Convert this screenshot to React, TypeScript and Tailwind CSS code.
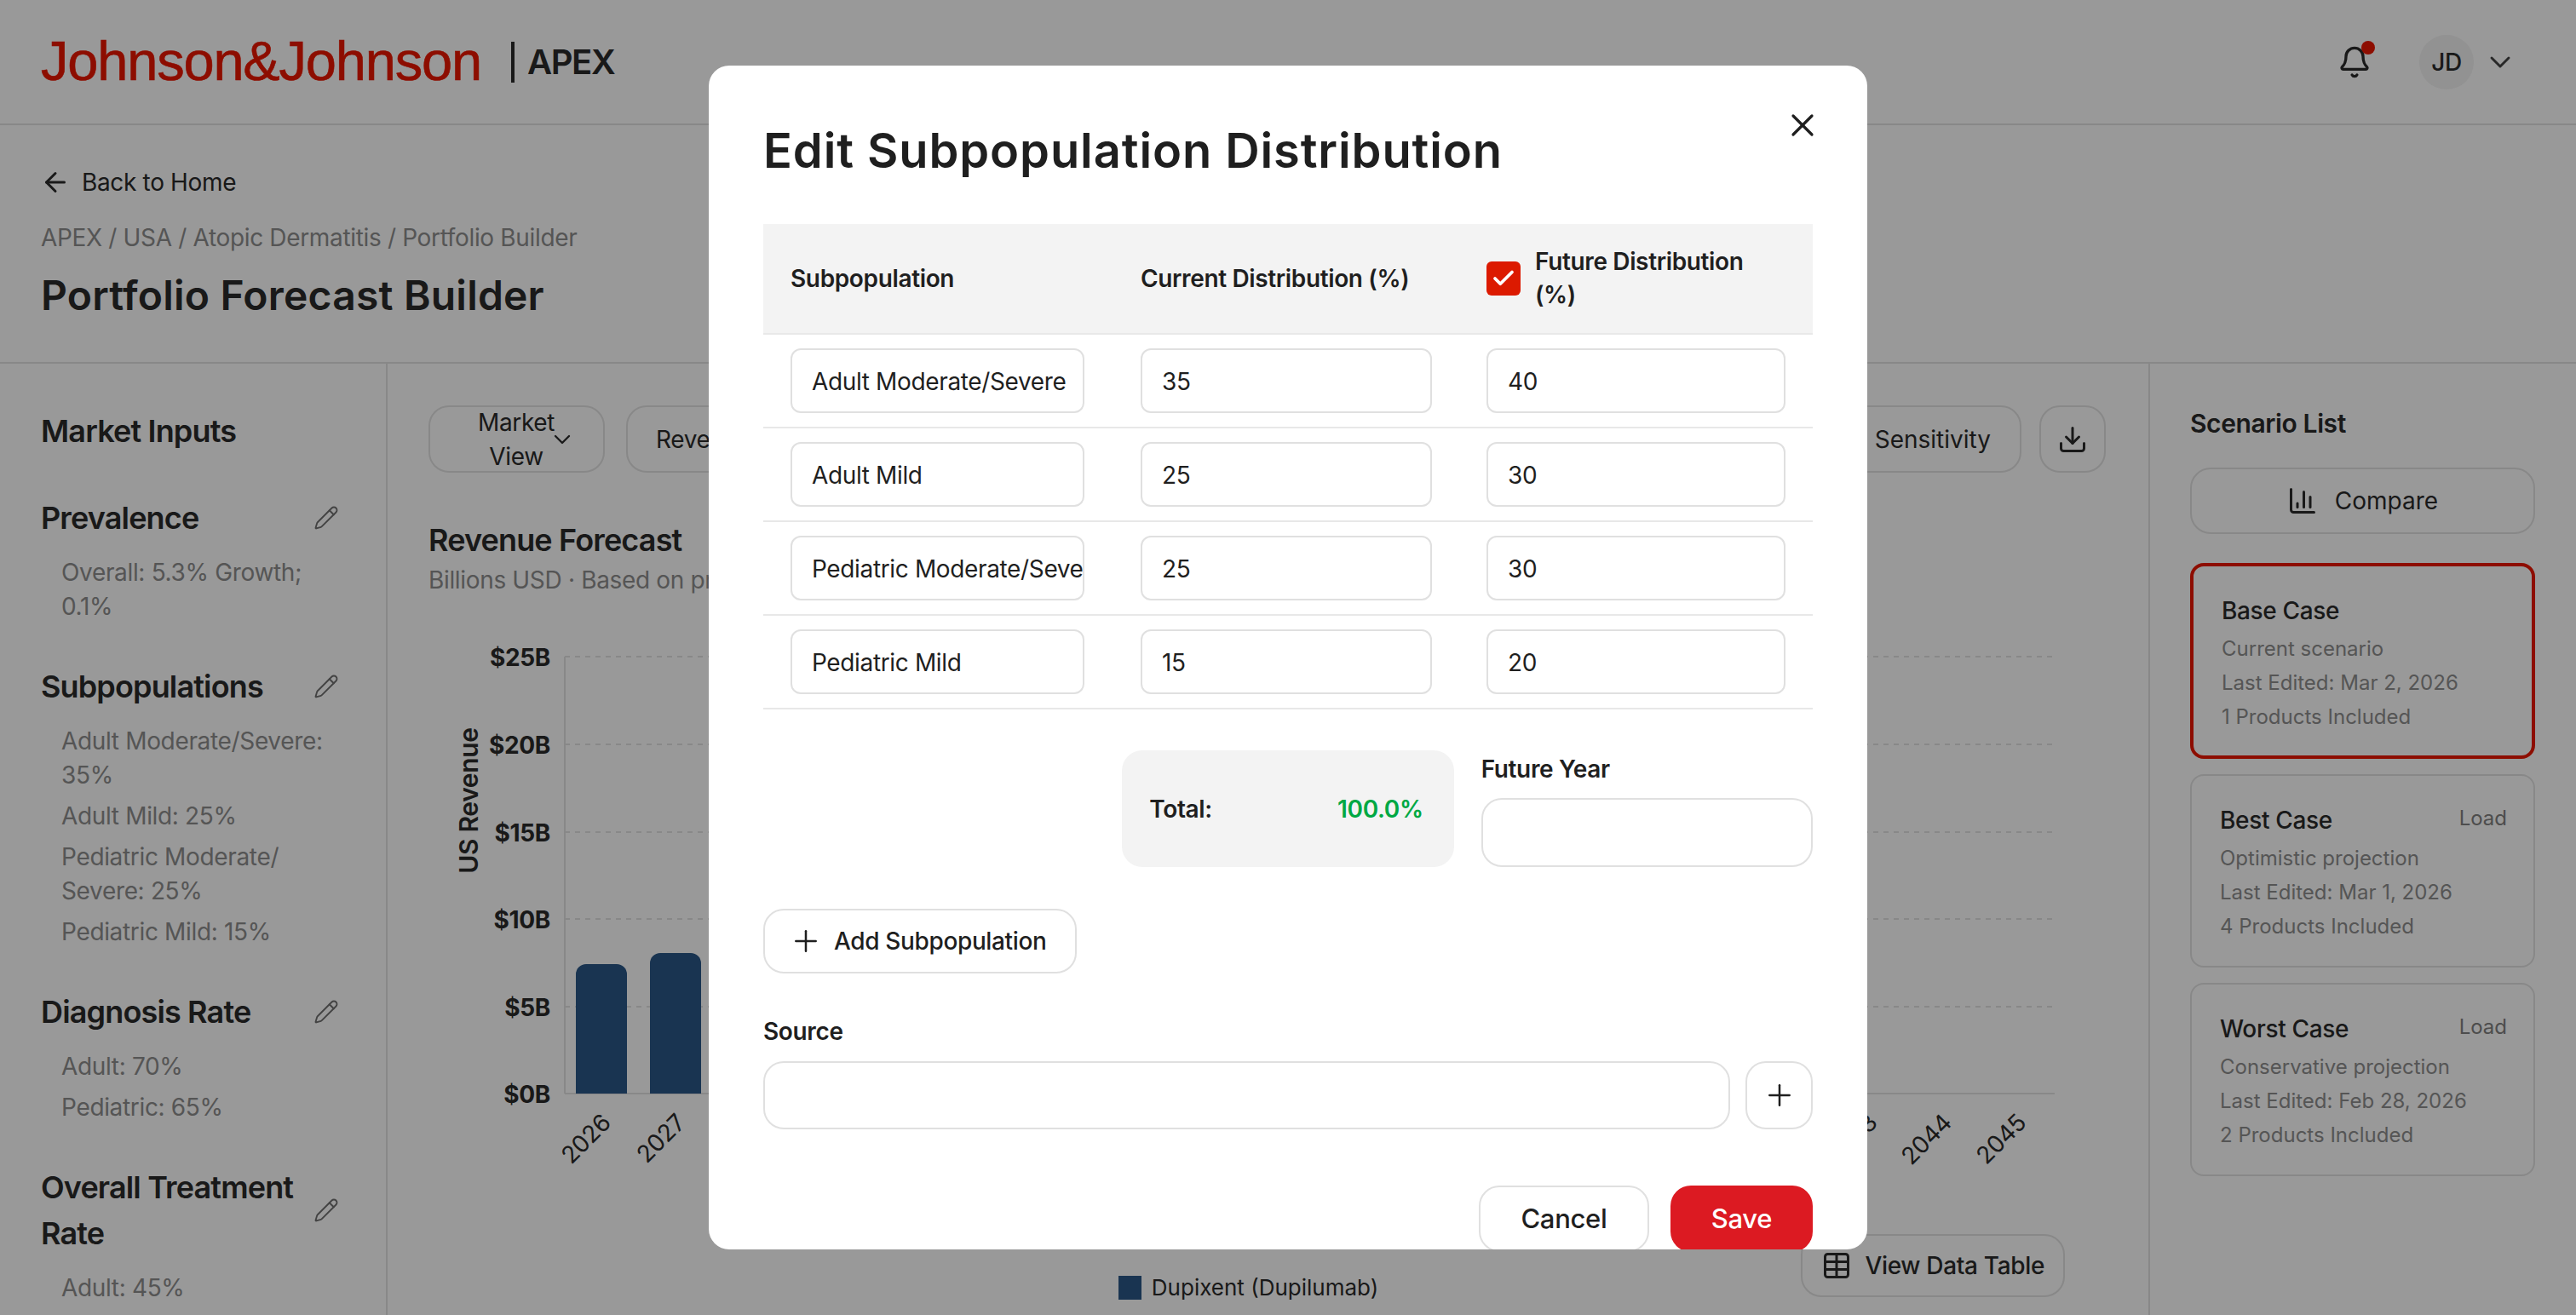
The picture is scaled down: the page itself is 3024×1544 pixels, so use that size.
import { ArrowLeft, Bell, Check, ChevronDown, ChartColumn, Download, Pencil, Plus, Table, X } from "lucide-react";

const inputCls = "h-[76px] w-full rounded-xl border-2 border-[#e0e0e0] bg-white pl-[23px] pr-0 pt-[2px] text-[28px] tracking-[-0.36px] text-[#1f1f1f] outline-none";
const boxCls = "rounded-3xl border-2 border-[#e0e0e0] bg-white outline-none";

const marketInputs = [
  { title: "Prevalence", items: ["Overall: 5.3% Growth; 0.1%"] },
  { title: "Subpopulations", items: ["Adult Moderate/Severe: 35%", "Adult Mild: 25%", "Pediatric Moderate/\u200bSevere: 25%", "Pediatric Mild: 15%"] },
  { title: "Diagnosis Rate", items: ["Adult: 70%", "Pediatric: 65%"] },
  { title: "Overall Treatment Rate", items: ["Adult: 45%"] },
];

const rows = [
  { name: "Adult Moderate/Severe", current: "35", future: "40" },
  { name: "Adult Mild", current: "25", future: "30" },
  { name: "Pediatric Moderate/Severe", current: "25", future: "30" },
  { name: "Pediatric Mild", current: "15", future: "20" },
];

const scenarios = [
  { name: "Base Case", desc: "Current scenario", edited: "Last Edited: Mar 2, 2026", products: "1 Products Included", active: true },
  { name: "Best Case", desc: "Optimistic projection", edited: "Last Edited: Mar 1, 2026", products: "4 Products Included", active: false },
  { name: "Worst Case", desc: "Conservative projection", edited: "Last Edited: Feb 28, 2026", products: "2 Products Included", active: false },
];

const yTicks = [
  { label: "$25B", y: 26 },
  { label: "$20B", y: 129 },
  { label: "$15B", y: 232 },
  { label: "$10B", y: 334 },
  { label: "$5B", y: 437 },
];

const years = Array.from({ length: 20 }, (_, i) => 2026 + i);

function RevenueChart() {
  return (
    <svg width="1969" height="704" className="mt-[44px] block">
      <text x="0" y="0" transform="translate(58 195) rotate(-90)" textAnchor="middle" className="fill-[#2b2b2b] text-[30px] font-semibold">
        US Revenue
      </text>
      {yTicks.map((t) => (
        <g key={t.label}>
          <line x1="160" x2="1909" y1={t.y} y2={t.y} stroke="#e3e3e3" strokeWidth="2" strokeDasharray="6 6" />
          <text x="143" y={t.y + 11} textAnchor="end" className="fill-[#2b2b2b] text-[28px] font-bold">
            {t.label}
          </text>
        </g>
      ))}
      <text x="143" y="550" textAnchor="end" className="fill-[#2b2b2b] text-[28px] font-bold">
        $0B
      </text>
      <line x1="160" x2="160" y1="26" y2="539" stroke="#e3e3e3" strokeWidth="2" />
      <line x1="160" x2="1909" y1="539" y2="539" stroke="#e3e3e3" strokeWidth="2" />
      <path d="M173 539V399a12 12 0 0 1 12-12h36a12 12 0 0 1 12 12v140z" fill="#2b5888" />
      <path d="M260 539V386a12 12 0 0 1 12-12h36a12 12 0 0 1 12 12v153z" fill="#2b5888" />
      {years.map((y, i) => {
        const x = 160 + (i + 0.5) * 87.45 + 12;
        return (
          <text key={y} x={x} y="575" textAnchor="end" transform={`rotate(-45 ${x} 575)`} className="fill-[#2b2b2b] text-[28px]">
            {y}
          </text>
        );
      })}
    </svg>
  );
}

function EditModal() {
  return (
    <div className="relative h-[1390px] w-[1360px] overflow-hidden rounded-3xl bg-white px-16 pt-[66px] text-[28px] tracking-[-0.36px] text-[#1f1f1f]">
      <button className="absolute right-[54px] top-[48px]">
        <X size={44} strokeWidth={1.75} />
      </button>
      <h2 className="mb-[52px] text-[56px] font-semibold leading-[68px] tracking-[0.9px]">Edit Subpopulation Distribution</h2>

      <div className="grid h-[130px] grid-cols-[411px_406px_415px] items-center border-b-2 border-[#e8e8e8] bg-[#f3f3f3] font-semibold">
        <div className="pl-8">Subpopulation</div>
        <div className="pl-8">Current Distribution (%)</div>
        <div className="flex items-center gap-[17px] pl-8 pr-8">
          <span className="flex h-10 w-10 shrink-0 items-center justify-center rounded-md bg-[#dc1a00] text-white">
            <Check size={30} strokeWidth={3} />
          </span>
          <span className="leading-[39px]">Future Distribution (%)</span>
        </div>
      </div>
      {rows.map((r) => (
        <div key={r.name} className="grid h-[110px] grid-cols-[411px_406px_415px] items-center border-b-2 border-[#e8e8e8]">
          <div className="pl-8 pr-[34px]">
            <input readOnly value={r.name} className={inputCls} />
          </div>
          <div className="pl-8 pr-8">
            <input readOnly value={r.current} className={inputCls} />
          </div>
          <div className="pl-8 pr-8">
            <input readOnly value={r.future} className={inputCls} />
          </div>
        </div>
      ))}

      <div className="mt-12 grid grid-cols-3 gap-8">
        <div className="col-start-2 flex h-[137px] items-center justify-between rounded-3xl bg-[#f3f3f3] pl-8 pr-[36px] font-semibold">
          <span>Total:</span>
          <span className="text-[#00a843]">100.0%</span>
        </div>
        <div className="flex flex-col justify-between">
          <label className="font-semibold leading-[44px]">Future Year</label>
          <input readOnly className={`h-[81px] w-full ${boxCls}`} />
        </div>
      </div>

      <button className="mt-[49px] flex h-[76px] items-center gap-[13px] rounded-3xl border-2 border-[#e0e0e0] bg-white pl-[28px] pr-[33px] font-medium">
        <Plus size={40} strokeWidth={1.5} />
        Add Subpopulation
      </button>

      <label className="mt-[48px] block font-semibold leading-[40px]">Source</label>
      <div className="mt-[15px] flex h-[80px] gap-[18px]">
        <input readOnly className={`h-full flex-1 ${boxCls}`} />
        <button className="flex h-full w-[79px] items-center justify-center rounded-3xl border-2 border-[#e0e0e0] bg-white">
          <Plus size={40} strokeWidth={1.5} />
        </button>
      </div>

      <div className="mt-[66px] flex justify-end gap-[25px] text-[31px] tracking-[-0.3px]">
        <button className="h-[78px] w-[200px] rounded-3xl border-2 border-[#e0e0e0] bg-white font-medium">Cancel</button>
        <button className="h-[78px] w-[167px] rounded-3xl bg-[#dc1a22] font-medium text-white">Save</button>
      </div>
    </div>
  );
}

export default function App() {
  return (
    <div className="relative h-[1544px] w-[3024px] overflow-hidden bg-white font-['Inter',sans-serif] text-[28px] tracking-[-0.34px] text-[#2b2b2b]">
      <header className="flex h-[147px] items-center justify-between border-b-2 border-[#e3e3e3] pl-12 pr-[69px]">
        <div className="flex items-center">
          <span className="-mt-[3px] w-[517px] whitespace-nowrap font-['Liberation_Sans',sans-serif] text-[65px] leading-none tracking-[-1.2px] text-[#eb1700] [-webkit-text-stroke:0.6px_#eb1700]">Johnson&amp;Johnson</span>
          <span className="ml-[35px] h-12 w-[4px] bg-[#2b2b2b]" />
          <span className="ml-[15px] text-[40px] font-semibold leading-none tracking-[-1.4px]">APEX</span>
        </div>
        <div className="flex items-center">
          <div className="relative mr-[56px]">
            <Bell size={40} strokeWidth={2} />
            <span className="absolute -right-[4px] -top-[5px] h-4 w-4 rounded-full bg-[#eb1700]" />
          </div>
          <span className="flex h-16 w-16 items-center justify-center rounded-full bg-[#f3f3f3] font-medium">JD</span>
          <ChevronDown size={40} strokeWidth={1.75} className="ml-[11px] text-[#444]" />
        </div>
      </header>

      <div className="h-[280px] border-b-2 border-[#e3e3e3] pl-12 pt-[47px]">
        <div className="flex h-10 items-center gap-[13px]">
          <ArrowLeft size={36} strokeWidth={2} className="-ml-[1px]" />
          Back to Home
        </div>
        <div className="mt-[25px] leading-10 text-[#8e8e8e]">APEX / USA / Atopic Dermatitis / Portfolio Builder</div>
        <h1 className="mt-[18px] text-[48px] font-semibold leading-[60px] tracking-[0.2px]">Portfolio Forecast Builder</h1>
      </div>

      <div className="flex h-[1117px]">
        <aside className="w-[455px] shrink-0 overflow-hidden border-r-2 border-[#e3e3e3] pl-12 pr-[46px] pt-[52px]">
          <h2 className="mb-12 text-[36px] font-semibold leading-[54px] tracking-[-0.85px]">Market Inputs</h2>
          <div className="flex flex-col gap-[47px]">
            {marketInputs.map((s) => (
              <section key={s.title}>
                <div className="flex items-center justify-between">
                  <h3 className="w-[310px] text-[36px] font-semibold leading-[54px] tracking-[-0.85px]">{s.title}</h3>
                  <button className="flex h-12 w-12 shrink-0 items-center justify-center text-[#707070]">
                    <Pencil size={30} strokeWidth={1.5} />
                  </button>
                </div>
                <ul className="mt-[17px] flex flex-col gap-2 pl-6 leading-10 text-[#8e8e8e]">
                  {s.items.map((item) => (
                    <li key={item}>{item}</li>
                  ))}
                </ul>
              </section>
            ))}
          </div>
        </aside>

        <main className="min-w-0 flex-1 pl-12 pr-[50px] pt-[49px]">
          <div className="flex items-center justify-between">
            <div className="flex items-center gap-[25px]">
              <button className="flex h-[79px] w-[207px] items-center rounded-3xl border-2 border-[#e3e3e3] pl-[56px]">
                <span className="w-[90px] text-center leading-10">Market View</span>
                <ChevronDown size={32} strokeWidth={1.75} className="-ml-[7px]" />
              </button>
              <button className="flex h-[79px] items-center rounded-3xl border-2 border-[#e3e3e3] px-[33px]">Revenue Forecast</button>
            </div>
            <div className="flex items-center gap-[21px]">
              <button className="flex h-[79px] items-center rounded-3xl border-2 border-[#e3e3e3] px-[34px] tracking-normal">Data Sensitivity</button>
              <button className="flex h-[79px] w-[78px] items-center justify-center rounded-3xl border-2 border-[#e3e3e3]">
                <Download size={36} strokeWidth={2} />
              </button>
            </div>
          </div>

          <h2 className="mt-[52px] text-[36px] font-semibold leading-[54px] tracking-[-0.85px]">Revenue Forecast</h2>
          <p className="leading-10 text-[#8e8e8e]">Billions USD · Based on product launch assumptions</p>

          <RevenueChart />

          <div className="grid grid-cols-[1fr_auto_1fr] items-end">
            <div />
            <div className="-mb-[3px] flex items-center gap-3 pr-[44px] text-[26px] leading-[28px] tracking-normal">
              <span className="h-[28px] w-[27px] bg-[#2b5888]" />
              Dupixent (Dupilumab)
            </div>
            <button className="ml-auto mr-12 flex h-[74px] items-center gap-[15px] rounded-3xl border-2 border-[#e3e3e3] pl-[22px] pr-[22px] font-medium">
              <Table size={36} strokeWidth={2} />
              View Data Table
            </button>
          </div>
        </main>

        <aside className="w-[502px] shrink-0 border-l-2 border-[#e3e3e3] pl-[47px] pr-12 pt-[48px]">
          <h2 className="text-[30px] font-semibold leading-[44px] tracking-[-0.4px]">Scenario List</h2>
          <button className="mt-[30px] flex h-[78px] w-full items-center justify-center gap-5 rounded-3xl border-2 border-[#e3e3e3] tracking-normal">
            <ChartColumn size={36} strokeWidth={2} />
            Compare
          </button>
          <div className="mt-[34px] flex flex-col gap-[18px]">
            {scenarios.map((s) => (
              <div
                key={s.name}
                className={s.active ? "rounded-2xl border-4 border-[#eb1700] pb-[25px] pl-[33px] pr-[31px] pt-[32px]" : "rounded-2xl border-2 border-[#e3e3e3] pb-[26px] pl-[33px] pr-[31px] pt-[32px]"}
              >
                <div className="flex items-start justify-between">
                  <span className="font-medium leading-[40px]">{s.name}</span>
                  {!s.active && <span className="text-[24px] leading-[36px] tracking-normal text-[#808080]">Load</span>}
                </div>
                <div className="mt-[5px] text-[24px] leading-10 tracking-normal text-[#8e8e8e]">
                  <div>{s.desc}</div>
                  <div>{s.edited}</div>
                  <div>{s.products}</div>
                </div>
              </div>
            ))}
          </div>
        </aside>
      </div>

      <div className="absolute inset-0 flex items-center justify-center bg-black/40">
        <EditModal />
      </div>
    </div>
  );
}
